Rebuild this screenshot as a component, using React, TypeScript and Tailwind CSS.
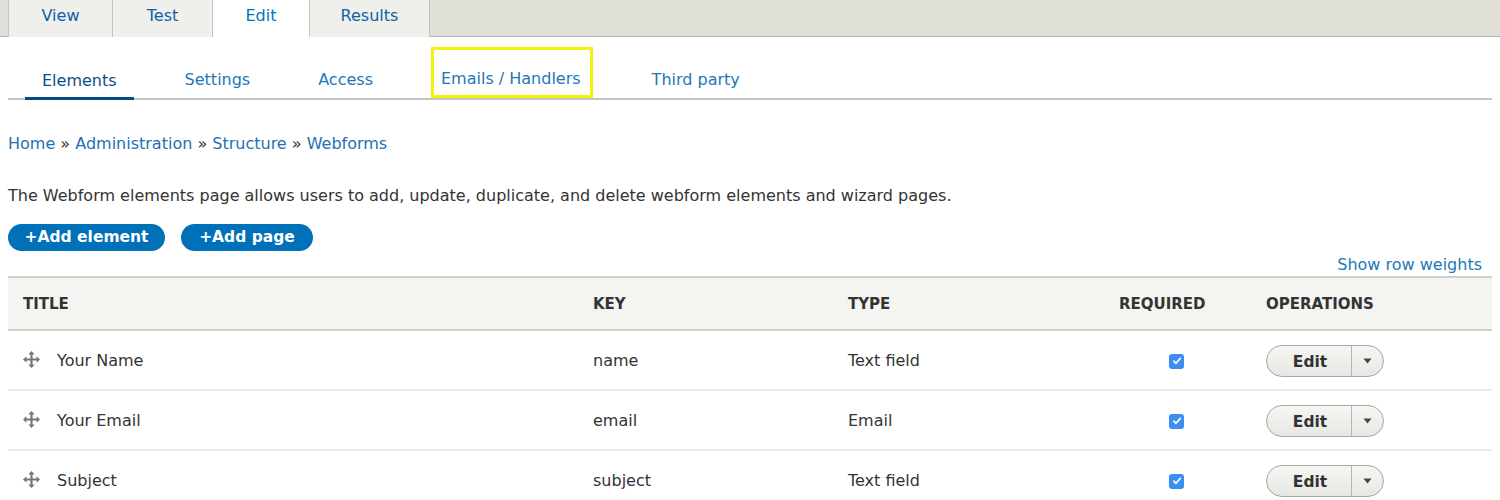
const font = "font-['DejaVu_Sans',sans-serif]";

const primaryTabs = [
  { label: "View", w: "w-[105px]" },
  { label: "Test", w: "w-[100px]" },
  { label: "Edit", w: "w-[97px]", active: true },
  { label: "Results", w: "w-[120px]" },
];

const secondaryTabs = [
  { label: "Elements", active: true },
  { label: "Settings" },
  { label: "Access" },
  { label: "Emails / Handlers", highlight: true },
  { label: "Third party" },
];

const rows = [
  { title: "Your Name", key: "name", type: "Text field" },
  { title: "Your Email", key: "email", type: "Email" },
  { title: "Subject", key: "subject", type: "Text field" },
];

function DragHandle() {
  return (
    <svg width="17" height="17" viewBox="0 0 16 16" className="text-[#777]">
      <path
        fill="currentColor"
        d="M8 0 11 3.2H9V7h3.8V5L16 8l-3.2 3V9H9v3.8h2L8 16l-3-3.2h2V9H3.2v2L0 8l3.2-3v2H7V3.2H5Z"
      />
    </svg>
  );
}

function Checkbox() {
  return (
    <span className="flex h-[15px] w-[15px] items-center justify-center rounded-[3px] bg-[#3d8ef2]">
      <svg width="10" height="10" viewBox="0 0 10 10">
        <path d="M1.8 5.2 4 7.3 8.3 2.4" fill="none" stroke="white" strokeWidth="1.7" strokeLinecap="round" strokeLinejoin="round" />
      </svg>
    </span>
  );
}

function DropButton() {
  return (
    <div className="flex h-[32px] w-[118px] items-stretch rounded-full border border-[#a6a6a6] bg-gradient-to-b from-[#f6f6f3] to-[#e7e7e4] text-[#333]">
      <span className="flex w-[84px] items-center justify-center pl-[2px] pt-[3px] text-[15.5px] font-bold">Edit</span>
      <span className="w-px bg-[#b5b5b5]" />
      <span className="flex flex-1 items-center justify-center">
        <svg width="9" height="6" viewBox="0 0 9 6">
          <path d="M0.5 0.5h8L4.5 5.5Z" fill="#444" />
        </svg>
      </span>
    </div>
  );
}

export default function App() {
  return (
    <div className={`${font} h-[500px] w-[1500px] overflow-hidden bg-white text-[#333]`}>
      {/* primary tabs */}
      <div className="flex h-[37px] border-b border-[#b4b4b0] bg-[#e1e0d8] pl-[8px]">
        {primaryTabs.map((t) => (
          <div
            key={t.label}
            className={`${t.w} -mb-px flex items-start justify-center border-r border-[#c2c2bd] pt-[4px] text-[16px] ${
              t.active ? "border-b border-b-white bg-white text-[#0074bd]" : "bg-[#efefeb] text-[#0a62a8]"
            } ${t.label === "View" ? "border-l border-l-[#c9c9c4]" : ""}`}
          >
            {t.label}
          </div>
        ))}
      </div>

      {/* secondary tabs */}
      <div className="mx-[8px] mt-[10px] flex h-[53px] items-stretch gap-[34px] border-b-2 border-[#c4c4c4] pl-[17px]">
        {secondaryTabs.map((t) =>
          t.highlight ? (
            <div key={t.label} className="flex items-stretch pl-[7px] pr-[8px]">
              <div className="flex items-center border-[3px] border-[#f4f400] pl-[7px] pr-[9px] pt-[13px] text-[16px] text-[#2277b9]">
                {t.label}
              </div>
            </div>
          ) : (
            <div
              key={t.label}
              className={`flex items-center border-b-[3px] px-[17px] pt-[18px] text-[16px] ${
                t.active ? "-mb-[2px] border-[#004f80] text-[#0b4f82]" : "border-transparent text-[#2277b9]"
              }`}
            >
              {t.label}
            </div>
          )
        )}
      </div>

      {/* breadcrumb */}
      <div className="mt-[32px] pl-[8px] text-[16px] text-[#2470b3]">
        Home <span className="text-[#333]">»</span> Administration <span className="text-[#333]">»</span> Structure{" "}
        <span className="text-[#333]">»</span> Webforms
      </div>

      <p className="mt-[28px] pl-[8px] text-[16px]">
        The Webform elements page allows users to add, update, duplicate, and delete webform elements and wizard pages.
      </p>

      <div className="mt-[16px] flex gap-[16px] pl-[8px]">
        <button className="flex h-[27px] w-[157px] items-center justify-center rounded-full bg-[#0071b8] text-[15.5px] font-bold text-white">
          +Add element
        </button>
        <button className="flex h-[27px] w-[132px] items-center justify-center rounded-full bg-[#0071b8] text-[15.5px] font-bold text-white">
          +Add page
        </button>
      </div>

      <div className="mr-[18px] mt-[2px] text-right text-[16px] leading-[24px] text-[#2277b9]">Show row weights</div>

      {/* table */}
      <div className="mx-[8px] -mt-[1px]">
        <div className="grid h-[55px] grid-cols-[570px_255px_271px_147px_1fr] items-center border-y-2 border-[#cfcfcb] bg-[#f4f4f1] pt-[2px] text-[15px] font-bold text-[#333]">
          <div className="pl-[15px]">TITLE</div>
          <div className="pl-[15px]">KEY</div>
          <div className="pl-[15px]">TYPE</div>
          <div className="pl-[15px]">REQUIRED</div>
          <div className="pl-[15px]">OPERATIONS</div>
        </div>
        {rows.map((r) => (
          <div
            key={r.key}
            className="grid h-[60px] grid-cols-[570px_255px_271px_147px_1fr] items-center border-b-2 border-[#ebebeb] pt-[2px] text-[16px]"
          >
            <div className="flex items-center gap-[17px] pl-[15px]">
              <span className="-mt-[4px]">
                <DragHandle />
              </span>
              <span>{r.title}</span>
            </div>
            <div className="pl-[15px]">{r.key}</div>
            <div className="pl-[15px]">{r.type}</div>
            <div className="pl-[65px]">
              <Checkbox />
            </div>
            <div className="pl-[15px]">
              <DropButton />
            </div>
          </div>
        ))}
      </div>
    </div>
  );
}
